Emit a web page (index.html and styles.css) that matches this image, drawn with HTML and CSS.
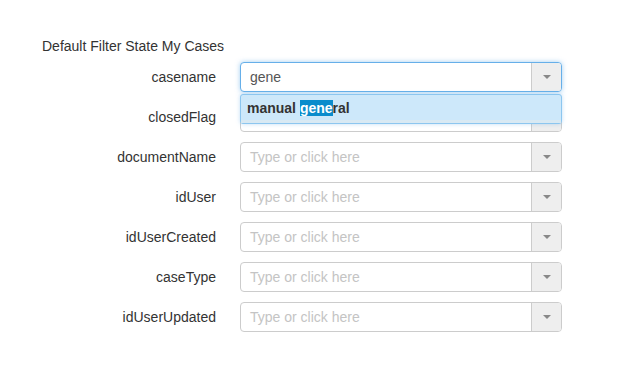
FILE: index.html
```html
<!DOCTYPE html>
<html lang="en">
<head>
  <meta charset="UTF-8" />
  <title>Default Filter State</title>
  <link rel="stylesheet" href="styles.css">
</head>
<body>
  <div class="filter-panel">
    <div class="panel-title">Default Filter State My Cases</div>

    <div class="form-row">
      <label class="field-label">casename</label>
      <div class="combo">
        <div class="combo-box focused">
          <span class="combo-value">gene</span>
          <span class="combo-btn"><span class="caret"></span></span>
        </div>
        <div class="suggest-list">
          <div class="suggest-item">manual <mark class="hit">gene</mark>ral</div>
        </div>
      </div>
    </div>

    <div class="form-row">
      <label class="field-label">closedFlag</label>
      <div class="combo">
        <div class="combo-box">
          <span class="combo-placeholder"></span>
          <span class="combo-btn"><span class="caret"></span></span>
        </div>
      </div>
    </div>

    <div class="form-row">
      <label class="field-label">documentName</label>
      <div class="combo">
        <div class="combo-box">
          <span class="combo-placeholder">Type or click here</span>
          <span class="combo-btn"><span class="caret"></span></span>
        </div>
      </div>
    </div>

    <div class="form-row">
      <label class="field-label">idUser</label>
      <div class="combo">
        <div class="combo-box">
          <span class="combo-placeholder">Type or click here</span>
          <span class="combo-btn"><span class="caret"></span></span>
        </div>
      </div>
    </div>

    <div class="form-row">
      <label class="field-label">idUserCreated</label>
      <div class="combo">
        <div class="combo-box">
          <span class="combo-placeholder">Type or click here</span>
          <span class="combo-btn"><span class="caret"></span></span>
        </div>
      </div>
    </div>

    <div class="form-row">
      <label class="field-label">caseType</label>
      <div class="combo">
        <div class="combo-box">
          <span class="combo-placeholder">Type or click here</span>
          <span class="combo-btn"><span class="caret"></span></span>
        </div>
      </div>
    </div>

    <div class="form-row">
      <label class="field-label">idUserUpdated</label>
      <div class="combo">
        <div class="combo-box">
          <span class="combo-placeholder">Type or click here</span>
          <span class="combo-btn"><span class="caret"></span></span>
        </div>
      </div>
    </div>
  </div>
</body>
</html>
```

FILE: styles.css
```css
body {
  margin: 0;
  background: #fff;
  color: #333;
  font-family: "Liberation Sans", Arial, sans-serif;
  font-size: 14px;
}

.filter-panel {
  padding: 36px 0 0 42px;
}

.panel-title {
  line-height: 20px;
  margin-bottom: 6px;
}

.form-row {
  display: flex;
  align-items: center;
  margin-bottom: 10px;
}

.field-label {
  width: 174px;
  margin-right: 24px;
  text-align: right;
  line-height: 30px;
}

.combo {
  position: relative;
  width: 322px;
}

.combo-box {
  display: flex;
  height: 30px;
  box-sizing: border-box;
  border: 1px solid #ccc;
  border-radius: 4px;
  background: #fff;
  overflow: hidden;
}

.combo-box.focused {
  border-color: #66afe9;
  box-shadow: 0 0 5px rgba(102, 175, 233, 0.6);
}

.combo-value,
.combo-placeholder {
  flex: 1;
  padding-left: 9px;
  line-height: 28px;
}

.combo-value {
  color: #555;
}

.combo-placeholder {
  color: #c4c4c4;
}

.combo-btn {
  width: 29px;
  border-left: 1px solid #ccc;
  background: #eee;
  display: flex;
  align-items: center;
  justify-content: center;
}

.caret {
  width: 0;
  height: 0;
  border-left: 4px solid transparent;
  border-right: 4px solid transparent;
  border-top: 4px solid #888;
}

/* autocomplete dropdown sits over the next row */
.suggest-list {
  position: absolute;
  top: 32px;
  left: 0;
  right: 0;
  z-index: 5;
  box-sizing: border-box;
  border: 1px solid #8cc6ef;
  border-radius: 3px;
  background: #cde8fa;
  box-shadow: 0 0 4px rgba(102, 175, 233, 0.4);
}

.suggest-item {
  padding: 0 6px;
  height: 28px;
  line-height: 27px;
  font-weight: bold;
  color: #333;
  border-bottom: 3px solid #d8e9f3;
  box-sizing: border-box;
}

.hit {
  background: #0a8ccc;
  color: #fff;
}
```
